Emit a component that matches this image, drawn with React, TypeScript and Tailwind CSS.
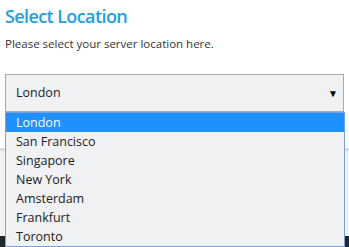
const cities = ["London", "San Francisco", "Singapore", "New York", "Amsterdam", "Frankfurt", "Toronto"];

export default function App() {
  return (
    <div className="relative w-[349px] h-[247px] overflow-hidden bg-white font-['Open_Sans',sans-serif] text-[#333]">
      <div className="px-[5px] pt-[3px]">
        <h1 className="text-[18px] leading-[26px] font-semibold text-[#1ba1e2] tracking-[-0.6px]">Select Location</h1>
        <p className="mt-[7px] text-[11.5px] leading-[16px] text-[#333]">Please select your server location here.</p>
        <div className="mt-[22px] h-[38px] border border-[#a9a9a9] bg-[#f0f1f3] flex items-center justify-between pl-[10px] pr-[5px]">
          <span className="text-[12.5px] text-[#222]">London</span>
          <span className="text-[10px] text-black">▼</span>
        </div>
      </div>
      <div className="mt-[36px] border-t-[3px] border-[#dcdcdc] bg-[#f2f2f2] h-[88px]" />
      <div className="h-[20px] bg-[#23282c]" />

      <ul className="absolute left-[5px] top-[112px] w-[340px] border border-[#7b9fd8] bg-[#f0f1f3]">
        {cities.map((c, i) => (
          <li
            key={c}
            className={`h-[19px] pl-[10px] text-[12.5px] leading-[19px] ${i === 0 ? "bg-[#1e90ff] text-white" : "text-[#222]"}`}
          >
            {c}
          </li>
        ))}
      </ul>
    </div>
  );
}
